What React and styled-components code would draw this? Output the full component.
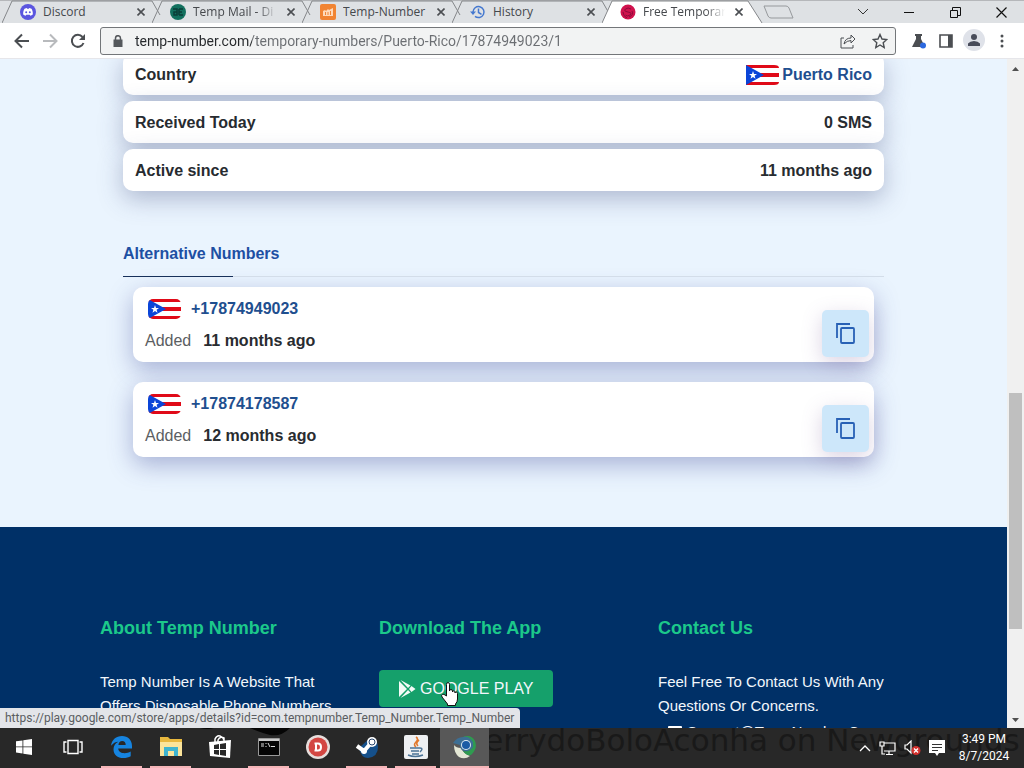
import React from 'react';
import styled, { createGlobalStyle } from 'styled-components';

const Global = createGlobalStyle`
  * { box-sizing: border-box; }
  body { margin: 0; overflow: hidden; font-family: "Liberation Sans", Arial, sans-serif; font-size: 16px; color: #272b30; }
  button { font: inherit; color: inherit; border: 0; background: none; padding: 0; }
  a { color: inherit; text-decoration: none; }
  svg { display: block; flex: none; }
  h2, h3, p, ul { margin: 0; padding: 0; }
`;

const ui = '"Open Sans", "Noto Sans", sans-serif';
const uiNarrow = 'Roboto, "Open Sans", sans-serif';

const Screen = styled.div`
  height: 100vh;
  display: flex;
  flex-direction: column;
  overflow: hidden;
`;

/* browser tabs */
const TabStrip = styled.header`
  flex: none;
  height: 23px;
  display: flex;
  align-items: stretch;
  background: #dee1e4;
  border-top: 1px solid #b5b7ba;
  font: 12px/22px ${ui};
  color: #45484c;
`;
const Tabs = styled.nav`
  display: flex;
  padding-left: 2px;
`;
const Tab = styled.div`
  position: relative;
  width: ${(p) => (p.$active ? '156px' : '150px')};
  display: flex;
  align-items: center;
  gap: 7px;
  padding: 0 ${(p) => (p.$active ? '14px' : '6px')} 0 18px;
`;
const TabShape = styled.svg`
  position: absolute;
  left: 0;
  top: -1px;
  z-index: 0;
`;
const TabIcon = styled.span`
  position: relative;
  flex: none;
`;
const TabLabel = styled.a`
  position: relative;
  flex: 1;
  min-width: 0;
  overflow: hidden;
  white-space: nowrap;
  mask-image: ${(p) => (p.$fade ? 'linear-gradient(to right, #000 75%, transparent 98%)' : 'none')};
`;
const TabClose = styled.button`
  position: relative;
  width: 10px;
  height: 22px;
  display: grid;
  place-items: center;
`;
const NewTab = styled.button`
  margin-left: 4px;
  display: flex;
  align-items: center;
`;
const WindowButtons = styled.div`
  margin-left: auto;
  display: flex;
`;
const WindowButton = styled.button`
  width: 46px;
  display: grid;
  place-items: center;
`;

/* address bar */
const Toolbar = styled.div`
  flex: none;
  height: 36px;
  display: flex;
  align-items: center;
  padding: 0 12px;
  background: #fff;
  border-bottom: 1px solid #e6e6ea;
`;
const NavButtons = styled.div`
  display: flex;
  gap: 8px;
  width: 88px;
`;
const IconButton = styled.button`
  width: 20px;
  height: 24px;
  display: grid;
  place-items: center;
  border-radius: 12px;
`;
const Address = styled.label`
  flex: 1;
  height: 28px;
  display: flex;
  align-items: center;
  gap: 12px;
  padding: 0 5px 0 12px;
  background: #f2f3f3;
  border: 1px solid #737679;
  border-radius: 3px;
`;
const UrlInput = styled.input`
  flex: 1;
  min-width: 0;
  height: 24px;
  padding: 0;
  border: 0;
  outline: 0;
  background: linear-gradient(to right, #26292c 117px, #6b6e72 117px);
  background-clip: text;
  -webkit-background-clip: text;
  color: transparent;
  font: 14px/24px ${uiNarrow};
`;
const ToolbarIcons = styled.div`
  display: flex;
  gap: 7px;
  padding-left: 13px;
`;
const Avatar = styled.button`
  width: 22px;
  height: 22px;
  display: grid;
  place-items: center;
  border-radius: 50%;
  background: #dfe2e9;
`;

/* web page */
const Viewport = styled.div`
  flex: 1;
  min-height: 0;
  display: flex;
  position: relative;
`;
const Page = styled.div`
  flex: 1;
  overflow: hidden;
  display: flex;
  flex-direction: column;
  background: #eaf4fe;
`;
const Main = styled.main`
  margin-top: -6px;
  flex: none;
  padding: 0 123px 70px;
`;
const Details = styled.ul`
  list-style: none;
  display: grid;
  gap: 6px;
  border-radius: 10px;
`;
const DetailRow = styled.li`
  display: flex;
  align-items: center;
  justify-content: space-between;
  height: 42px;
  padding: 2px 12px 0;
  background: #fff;
  border-radius: 10px;
  font-weight: 700;
  box-shadow: 0 8px 24px rgba(60, 70, 120, 0.34);
  position: relative;
`;
const DetailValue = styled.span`
  display: flex;
  align-items: center;
  gap: 3px;
`;
const Link = styled.a`
  color: #1f4f8f;
  font-weight: 700;
`;
const Heading = styled.h2`
  margin-top: 51px;
  padding-bottom: 10px;
  border-bottom: 1px solid #d3dde9;
  font-size: 16px;
  line-height: 24px;
  color: #1d4fa3;
  position: relative;
  &::after {
    content: '';
    position: absolute;
    left: 0;
    bottom: -1px;
    width: 110px;
    height: 1px;
    background: #17305a;
  }
`;
const NumberList = styled.div`
  display: grid;
  gap: 20px;
  padding: 10px 10px 0;
`;
const NumberCard = styled.article`
  display: flex;
  justify-content: space-between;
  height: 75px;
  padding: 6px 5px 5px 12px;
  background: #fff;
  border-radius: 10px;
  box-shadow: 0 8px 24px rgba(60, 70, 150, 0.38);
`;
const NumberTitle = styled.h3`
  display: flex;
  align-items: center;
  gap: 10px;
  height: 32px;
  padding-left: 3px;
  font-size: 16px;
`;
const Added = styled.p`
  display: flex;
  gap: 12px;
  line-height: 32px;
  color: #5b5e62;
  strong { color: #292c30; }
`;
const CopyButton = styled.button`
  align-self: flex-end;
  width: 47px;
  height: 47px;
  display: grid;
  place-items: center;
  background: #cde7fa;
  border-radius: 5px;
  box-shadow: 0 6px 20px rgba(120, 90, 150, 0.26);
`;
const Footer = styled.footer`
  flex: none;
  display: grid;
  grid-template-columns: repeat(3, 1fr);
  padding: 89px 70px 40px 100px;
  background: #003067;
  color: #f2f7fc;
`;
const FooterColumn = styled.section`
  padding-right: 40px;
  font-size: 15px;
  line-height: 24px;
`;
const FooterTitle = styled.h3`
  margin-bottom: 30px;
  font-size: 18px;
  line-height: 24px;
  color: #1cc88a;
`;
const PlayButton = styled.a`
  display: flex;
  align-items: center;
  gap: 4px;
  width: 174px;
  height: 37px;
  padding-left: 20px;
  border-radius: 4px;
  background: #15a06b;
  font-size: 16px;
`;
const ContactLink = styled.a`
  display: flex;
  align-items: center;
  gap: 5px;
  padding: 2px 0 0 10px;
`;
const StatusBubble = styled.div`
  position: absolute;
  left: 0;
  bottom: 0;
  height: 20px;
  padding: 0 6px 0 5px;
  background: #e3e5e9;
  border-top-right-radius: 4px;
  font: 12px/20px ${uiNarrow};
  color: #5a5d61;
  white-space: nowrap;
`;
const Cursor = styled.svg`
  position: absolute;
  left: 441px;
  top: 623px;
`;
const Scrollbar = styled.div`
  flex: none;
  width: 17px;
  display: flex;
  flex-direction: column;
  align-items: center;
  justify-content: space-between;
  padding: 8px 0 6px;
  background: #f0f0f0;
`;
const Track = styled.div`
  flex: 1;
  width: 13px;
  display: grid;
  grid-template-rows: 320fr 235fr 88fr;
  &::before { content: ''; }
`;
const Thumb = styled.div`
  background: #bfbfbf;
`;

/* taskbar */
const Taskbar = styled.footer`
  flex: none;
  height: 40px;
  display: flex;
  align-items: stretch;
  position: relative;
  overflow: hidden;
  background: #282828;
  color: #fff;
`;
const Watermark = styled.div`
  position: absolute;
  left: 475px;
  top: -10px;
  font: 31px/44px "DejaVu Sans", sans-serif;
  color: #191919;
  white-space: nowrap;
`;
const Splash = styled.svg`
  position: absolute;
  left: 190px;
  top: 0;
`;
const TaskButton = styled.button`
  position: relative;
  width: 49px;
  display: grid;
  place-items: center;
  background: ${(p) => (p.$active ? '#585858' : 'transparent')};
  border-bottom: 2px solid transparent;
  &:first-of-type { width: 48px; }
  &::after {
    content: '';
    display: ${(p) => (p.$open ? 'block' : 'none')};
    position: absolute;
    left: ${(p) => (p.$active ? '0' : '4px')};
    right: ${(p) => (p.$active ? '0' : '4px')};
    bottom: -2px;
    height: 2px;
    background: #f5b5b8;
  }
`;
const Tray = styled.div`
  position: relative;
  margin-left: auto;
  display: flex;
  align-items: center;
  gap: 8px;
  padding-right: 9px;
`;
const Clock = styled.time`
  width: 62px;
  text-align: center;
  font: 12px/17px ${uiNarrow};
  white-space: nowrap;
`;

const Flag = ({ id, round }) => (
  <svg width="33" height="20" viewBox="0 0 33 20" aria-label="Puerto Rico flag">
    <clipPath id={id}>
      {round ? <rect width="33" height="20" rx="5" /> : <path d="M0 0h28q5 0 5 3v14q0 3-5 3H0z" />}
    </clipPath>
    <g clipPath={`url(#${id})`}>
      <path fill="#fff" d="M0 0h33v20H0z" />
      <path fill="#e00a18" d="M0 0h33v3H0zM0 8h33v4H0zM0 17h33v3H0z" />
      <path fill="#0b45d8" d="M0 0l18 10L0 20z" />
      <path fill="#fff" d="M7 6l1 3h3l-2.400 1.800.9 3L7 12l-2.500 1.800.9-3L3 9h3z" />
    </g>
  </svg>
);

const Stroke = ({ d, w = 16, h = w, color = '#4b4e52', sw = 1, children }) => (
  <svg width={w} height={h} viewBox={`0 0 ${w} ${h}`} fill="none" stroke={color} strokeWidth={sw} aria-hidden="true">
    <path d={d} />
    {children}
  </svg>
);

const icons = {
  discord: (
    <svg width="16" height="16" viewBox="0 0 16 16">
      <circle cx="8" cy="8" r="8" fill="#5b55df" />
      <path fill="#fff" d="M4.500 4.800L6.700 4l.5.8h1.600l.5-.8 2.200.8c1 1.600 1.500 3.500 1.300 5.700-.8.700-1.600 1-2.400 1.200l-.7-1H6.300l-.7 1c-.8-.2-1.600-.5-2.400-1.200-.2-2.200.3-4.100 1.300-5.700z" />
      <circle cx="6.200" cy="8.300" r="1" fill="#5b55df" />
      <circle cx="9.800" cy="8.300" r="1" fill="#5b55df" />
    </svg>
  ),
  mail: (
    <svg width="16" height="16" viewBox="0 0 16 16">
      <circle cx="8" cy="8" r="8" fill="#12705e" />
      <path fill="none" stroke="#0a3d38" strokeWidth="1.500" d="M3 5h4v6H4V8h3M9 5h4M9 8h3M9 11h4M9 5v6" />
    </svg>
  ),
  number: (
    <svg width="16" height="16" viewBox="0 0 16 16">
      <rect width="16" height="16" rx="2" fill="#f18432" />
      <path fill="#ffd9b8" d="M3 7l2-1 1 1 2-2 1 1 4-2v8H3z" />
      <path fill="none" stroke="#f18432" d="M5.500 8v3M8 8v3M10.500 7v4" />
    </svg>
  ),
  history: (
    <svg width="16" height="16" viewBox="0 0 16 16" fill="none" stroke="#4478cf" strokeWidth="1.500">
      <path d="M3 8a5.500 5.500 0 1 1 2 4.300M8.500 4.500V8.500l3 1.800" />
      <path fill="#4478cf" stroke="none" d="M0 7.500h6L3 11z" />
    </svg>
  ),
  free: (
    <svg width="16" height="16" viewBox="0 0 16 16">
      <circle cx="8" cy="8" r="7.500" fill="#d0124d" />
      <path fill="none" stroke="#8d0b3c" d="M11 5Q8 3 5.500 5t2.500 3 2 3-4.500 0M12 7q2 4-3 6M3 8q0 4 4 6" />
    </svg>
  ),
};

const tabs = [
  { icon: 'discord', label: 'Discord' },
  { icon: 'mail', label: 'Temp Mail - Di', fade: true },
  { icon: 'number', label: 'Temp-Number' },
  { icon: 'history', label: 'History' },
  { icon: 'free', label: 'Free Temporar', fade: true, active: true },
];

const numbers = [
  { number: '+17874949023', added: '11 months ago' },
  { number: '+17874178587', added: '12 months ago' },
];

const CopyIcon = () => (
  <Stroke w={22} h={24} color="#2861b5" sw={1.8} d="M2 16V2h13">
    <rect x="6" y="6" width="13" height="15" rx="1" />
  </Stroke>
);

const tasks = [
  {
    name: 'Start',
    art: <svg width="16" height="16" viewBox="0 0 16 16" fill="#fff"><path d="M0 2.300L6.500 1.400v6.100H0zM7.300 1.300L16 0v7.500H7.300zM0 8.300h6.500v6.200L0 13.600zM7.300 8.300H16V16l-8.700-1.300z" /></svg>,
  },
  {
    name: 'Task View',
    art: <Stroke w={20} h={16} color="#fff" sw={1.4} d="M5 1.500h10v13H5zM3.500 3H1v10h2.500M16.500 3H19v10h-2.500" />,
  },
  {
    name: 'Edge', open: true,
    art: <svg width="21" height="22" viewBox="0 0 21 22" fill="#1684e0"><path d="M0 9.800C1 3.500 5 0 11 0c6 0 10 4 10 10v2.500H7.200c.2 3 2.800 4.700 6.300 4.700 2.300 0 4.400-.6 6.200-1.700v4.700c-2 1.200-4.500 1.800-7.300 1.800C6.500 22 2.500 18.700 2.500 13.200c0-3.300 1.800-6 4.900-7.500C4.500 5.800 2 7.200 0 9.800zM7.400 9h7.300c0-2.600-1.300-4-3.500-4-2.100 0-3.500 1.500-3.800 4z" /></svg>,
  },
  {
    name: 'File Explorer', open: true,
    art: <svg width="22" height="20" viewBox="0 0 22 20"><path fill="#e8b83e" d="M0 0h8l2 2h12v17H0z" /><path fill="#fbe49a" d="M0 5h22v14H0z" /><path fill="#3fb4cf" d="M4 10h14v9h-4v-5H8v5H4z" /></svg>,
  },
  {
    name: 'Store',
    art: <svg width="22" height="24" viewBox="0 0 22 24"><path fill="none" stroke="#fff" strokeWidth="1.500" d="M6 7V4q2-4 5-3t4 4v2M9 7V5q2-4 6-2v4" /><path fill="#fff" d="M0 7l22-2-1 18-20-2z" /><path fill="#282828" d="M5 10l5-1v5H5zM11 9l6-1v6h-6zM5 15h5v5l-5-1zM11 15h6v6l-6-1z" /></svg>,
  },
  {
    name: 'Command Prompt', open: true,
    art: <svg width="22" height="18" viewBox="0 0 22 18"><path fill="#050505" stroke="#999" d="M.5.5h21v17H.5z" /><path fill="#ccc" d="M1 1h20v2H1z" /><path fill="none" stroke="#ddd" d="M3 6h3M3 8h3M8 5v1M8 8v1M10 5l2 4M13 8.500h4" /></svg>,
  },
  {
    name: 'D',
    art: <svg width="24" height="24" viewBox="0 0 24 24"><circle cx="12" cy="12" r="12" fill="#e6dedc" /><circle cx="12" cy="12" r="9.500" fill="#d34642" /><path fill="none" stroke="#fff" strokeWidth="2" d="M10 8.500h2q3 0 3 3.500t-3 3.500h-2zM8.500 8.500h2M8.500 15.500h2" /></svg>,
  },
  {
    name: 'Steam', open: true,
    art: <svg width="24" height="24" viewBox="0 0 24 24"><path fill="#15508b" d="M4 13L15 3q8 1 8 9 0 10-10 11-7 0-9-10z" /><path stroke="#fff" strokeWidth="4" d="M2 11l7 5 7-8" fill="none" /><circle cx="17" cy="7" r="5" fill="#fff" /><circle cx="17" cy="7" r="3" fill="none" stroke="#27446b" /><circle cx="9" cy="16" r="3" fill="#fff" /></svg>,
  },
  {
    name: 'Java', open: true,
    art: <svg width="24" height="24" viewBox="0 0 24 24"><rect width="24" height="24" rx="2" fill="#eef0f2" /><path fill="none" stroke="#e2792c" strokeWidth="1.600" d="M12 2q3 2 0 5t0 5M15 5q-4 3-1 6" /><path fill="none" stroke="#4b7396" strokeWidth="1.400" d="M6 13h10M7 16h8M8 19h7M16 13q4 0 0 4M4 20q7 3 15 0" /></svg>,
  },
  {
    name: 'Browser', open: true, active: true,
    art: <svg width="24" height="24" viewBox="0 0 24 24"><path fill="#e4e7d5" d="M1 10q2 3 7 3 3 6 9 8-5 4-11 1-5-4-5-12z" /><path fill="#2f9b50" d="M10 2q8-3 12 4 3 8-4 14-5 1-8-4 8 1 9-5z" /><path fill="#3d6f94" d="M0 8q4-6 10-6 6-1 10 5v5q-3 5-9 4-4-1-4-6z" /><circle cx="13" cy="10" r="5" fill="#dce9f3" /><circle cx="13" cy="10" r="4" fill="#1b5ca5" /></svg>,
  },
];

export default function App() {
  return (
    <Screen>
      <Global />
      <TabStrip>
        <Tabs>
          {tabs.map((t) => (
            <Tab key={t.icon} $active={t.active}>
              <TabShape width="172" height="23" viewBox="0 0 172 23" fill={t.active ? '#fff' : 'none'} stroke="#84878a">
                <path d={t.active ? 'M0 23L10 1h136l14 22' : 'M0 23L10 1h140l8 14'} />
              </TabShape>
              <TabIcon>{icons[t.icon]}</TabIcon>
              <TabLabel href="#" $fade={t.fade}>{t.label}</TabLabel>
              <TabClose aria-label="Close tab"><Stroke w={8} sw={1.6} d="M.5.5l7 7M7.500.5l-7 7" /></TabClose>
            </Tab>
          ))}
        </Tabs>
        <NewTab aria-label="New tab"><Stroke w={32} h={14} color="#96999c" d="M2 1h22q2 0 3 2l4 10H9q-2 0-3-2z" /></NewTab>
        <WindowButtons>
          <WindowButton aria-label="Search tabs"><Stroke w={12} h={8} color="#333" d="M1 1l5 5 5-5" /></WindowButton>
          <WindowButton aria-label="Minimize"><Stroke w={10} h={1} color="#111" d="M0 .5h10" /></WindowButton>
          <WindowButton aria-label="Restore"><Stroke w={11} color="#111" d="M.5 3.500h7v7h-7zM2.500 3.500v-3h8v8h-3" /></WindowButton>
          <WindowButton aria-label="Close"><Stroke w={11} color="#111" sw={1.2} d="M.5.5l10 10M10.500.5l-10 10" /></WindowButton>
        </WindowButtons>
      </TabStrip>

      <Toolbar>
        <NavButtons>
          <IconButton aria-label="Back"><Stroke sw={2} d="M15 8H2M8 1.500L1.500 8 8 14.500" /></IconButton>
          <IconButton aria-label="Forward"><Stroke sw={2} color="#b8babd" d="M1 8h13M8 1.500L14.500 8 8 14.500" /></IconButton>
          <IconButton aria-label="Reload">
            <Stroke sw={2} d="M13.500 10A6 6 0 1 1 12.500 4"><path fill="#4b4e52" stroke="none" d="M15 1v6H9z" /></Stroke>
          </IconButton>
        </NavButtons>
        <Address>
          <svg width="10" height="12" viewBox="0 0 10 12"><path fill="none" stroke="#55585c" strokeWidth="1.500" d="M2.500 5V3.200a2.500 2.500 0 0 1 5 0V5" /><path fill="#55585c" d="M.5 4.500h9V12h-9z" /></svg>
          <UrlInput aria-label="Address" defaultValue="temp-number.com/temporary-numbers/Puerto-Rico/17874949023/1" />
          <IconButton aria-label="Share"><Stroke d="M4 5H1v10h12v-3M4 11q1-6 7-6V2l4 4-4 4V7.500q-4 0-7 3.500z" /></IconButton>
          <IconButton aria-label="Bookmark"><Stroke sw={1.4} d="M8 1.500l2 4.500 4.800.5-3.600 3.200 1 4.800L8 12l-4.200 2.500 1-4.800L1.200 6.500 6 6z" /></IconButton>
        </Address>
        <ToolbarIcons>
          <IconButton aria-label="Labs">
            <svg width="16" height="16" viewBox="0 0 16 16"><path fill="#4b4e52" d="M4 1h7v2h-1v3l4 8H1l4-8V3H4z" /><circle cx="12" cy="12.500" r="3" fill="#2c69df" /></svg>
          </IconButton>
          <IconButton aria-label="Side panel"><Stroke w={14} sw={1.6} d="M1 1h12v12H1z"><path strokeWidth="4" d="M11 1v12" /></Stroke></IconButton>
          <Avatar aria-label="Profile"><svg width="12" height="12" viewBox="0 0 12 12" fill="#484c5a"><circle cx="6" cy="3" r="3" /><path d="M0 12V9.500Q2 7 6 7t6 2.500V12z" /></svg></Avatar>
          <IconButton aria-label="Menu"><svg width="4" height="14" viewBox="0 0 4 14" fill="#4b4e52"><circle cx="2" cy="2" r="1.500" /><circle cx="2" cy="7" r="1.500" /><circle cx="2" cy="12" r="1.500" /></svg></IconButton>
        </ToolbarIcons>
      </Toolbar>

      <Viewport>
        <Page>
          <Main>
            <Details>
              <DetailRow>Country<DetailValue><Flag id="flag-country" /><Link href="#">Puerto Rico</Link></DetailValue></DetailRow>
              <DetailRow>Received Today<DetailValue>0 SMS</DetailValue></DetailRow>
              <DetailRow>Active since<DetailValue>11 months ago</DetailValue></DetailRow>
            </Details>
            <Heading>Alternative Numbers</Heading>
            <NumberList>
              {numbers.map((n) => (
                <NumberCard key={n.number}>
                  <div>
                    <NumberTitle><Flag id={`flag-${n.number.slice(1)}`} round /><Link href="#">{n.number}</Link></NumberTitle>
                    <Added>Added <strong>{n.added}</strong></Added>
                  </div>
                  <CopyButton aria-label="Copy number"><CopyIcon /></CopyButton>
                </NumberCard>
              ))}
            </NumberList>
          </Main>
          <Footer>
            <FooterColumn>
              <FooterTitle>About Temp Number</FooterTitle>
              <p>Temp Number Is A Website That Offers Disposable Phone Numbers</p>
            </FooterColumn>
            <FooterColumn>
              <FooterTitle>Download The App</FooterTitle>
              <PlayButton href="#">
                <svg width="17" height="18" viewBox="0 0 17 18" fill="#f3fbf7"><path d="M0 1v16l8-8zM1.500 0L9 8l2.500-2.500zM1.500 18L9 10l2.500 2.500zM12.500 6L16.500 9l-4 3-2.500-3z" /></svg>
                GOOGLE PLAY
              </PlayButton>
            </FooterColumn>
            <FooterColumn>
              <FooterTitle>Contact Us</FooterTitle>
              <p>Feel Free To Contact Us With Any Questions Or Concerns.</p>
              <ContactLink href="#">
                <svg width="14" height="12" viewBox="0 0 14 12"><rect width="14" height="12" rx="1" fill="#fff" /></svg>
                Support@TempNumber.Com
              </ContactLink>
            </FooterColumn>
          </Footer>
        </Page>
        <Scrollbar>
          <svg width="7" height="4" viewBox="0 0 7 4"><path fill="#505050" d="M3.500 0L7 4H0z" /></svg>
          <Track><Thumb /></Track>
          <svg width="7" height="4" viewBox="0 0 7 4"><path fill="#505050" d="M0 0h7L3.500 4z" /></svg>
        </Scrollbar>
        <StatusBubble>https://play.google.com/store/apps/details?id=com.tempnumber.Temp_Number.Temp_Number</StatusBubble>
        <Cursor width="17" height="24" viewBox="0 0 17 24">
          <path fill="#fff" stroke="#111" d="M5.500 14V2.500q0-2 1.500-2t1.500 2V9q0-1.500 1.400-1.500T11.500 9v1q0-1.200 1.300-1.200T14 10v1q0-1 1.200-1t1.300 1.500V17q0 3-2 5v1.500H6.500V22L1 15q-1-2 .5-2.500T4 13z" />
        </Cursor>
      </Viewport>

      <Taskbar>
        <Splash width="110" height="14" viewBox="0 0 110 14"><path fill="#050505" d="M10 0h14q-6 2-14 0zM60 0h40q-9 9-20 7-11-3-20-7z" /></Splash>
        <Watermark>JerrydoBoloAconha on Newgrounds</Watermark>
        {tasks.map((t) => (
          <TaskButton key={t.name} aria-label={t.name} $open={t.open} $active={t.active}>{t.art}</TaskButton>
        ))}
        <Tray>
          <Stroke w={12} h={8} color="#fff" sw={1.3} d="M1 7l5-5 5 5" />
          <Stroke w={17} color="#fff" sw={1.2} d="M5 3h11v8H5M10 11v3M7 14.500h7M1 2h4v4H1zM3 6v8h3" />
          <svg width="17" height="16" viewBox="0 0 17 16"><path fill="none" stroke="#fff" strokeWidth="1.200" d="M1 5h2l4-4v12L3 9H1z" /><circle cx="12" cy="10.500" r="4.500" fill="#d3312e" /><path stroke="#fff" strokeWidth="1.300" d="M10 8.500l4 4M14 8.500l-4 4" /></svg>
          <svg width="16" height="16" viewBox="0 0 16 16"><path fill="#fff" d="M0 0h16v13h-6l-2 3-2-3H0z" /><path stroke="#333" d="M3 4.500h10M3 7.500h10M3 10.500h6" /></svg>
          <Clock>3:49 PM<br />8/7/2024</Clock>
        </Tray>
      </Taskbar>
    </Screen>
  );
}
